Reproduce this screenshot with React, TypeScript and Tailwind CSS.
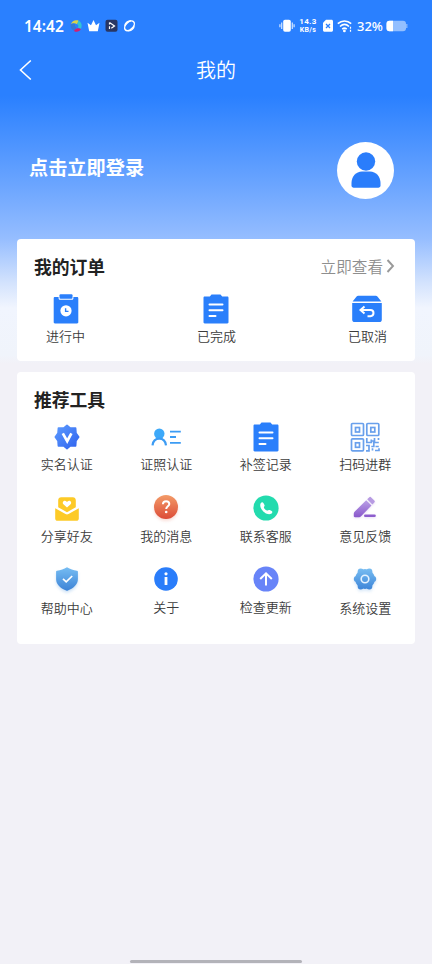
import type { ReactNode } from "react"

interface MenuItem {
  label: string
  icon: ReactNode
  iconClass?: string
  labelClass?: string
}

function ClipboardClockIcon() {
  return (
    <svg width="26" height="30" viewBox="0 0 26 30">
      <path d="M1.900 3H5.600v1.200c0 .9.700 1.600 1.600 1.600h11.600c.9 0 1.600-.7 1.600-1.600V3h3.700c.7 0 1.200.5 1.200 1.200v24.100c0 .7-.5 1.200-1.200 1.200H1.900c-.7 0-1.200-.5-1.200-1.200V4.200C.7 3.500 1.200 3 1.900 3z" fill="#2a7ffb" />
      <rect x="6.500" y="0.300" width="13" height="4.500" rx="1" fill="#2a7ffb" />
      <circle cx="13" cy="16.800" r="5.600" fill="#fff" />
      <path d="M12.600 14.300v3.100h2.900" fill="none" stroke="#2a7ffb" strokeWidth="1.400" />
    </svg>
  )
}

function ClipboardListIcon() {
  return (
    <svg width="26" height="30" viewBox="0 0 26 30">
      <path d="M1.700 2.500h5.100L8.500.4h9l1.700 2.100h5.100c.7 0 1.200.5 1.200 1.200v24.600c0 .7-.5 1.200-1.200 1.200H1.700c-.7 0-1.200-.5-1.200-1.200V3.700c0-.7.5-1.200 1.200-1.200z" fill="#2a7ffb" />
      <path d="M6.500 10.500h13M6.500 16.200h13M6.500 22h6" stroke="#fff" strokeWidth="2" strokeLinecap="round" />
    </svg>
  )
}

function BoxReturnIcon() {
  return (
    <svg width="30" height="30" viewBox="0 0 30 30">
      <path d="M6.200 1.800h17.600c.7 0 1.200.2 1.600.7l4 5H.6l4-5c.4-.5.900-.7 1.600-.7z" fill="#2a7ffb" />
      <path d="M.2 9.100h29.600v16.600c0 1.400-1 2.400-2.400 2.400H2.600C1.200 28.100.2 27.100.2 25.700z" fill="#2a7ffb" />
      <path d="M12.500 12.500 8.500 16l4 3.500M9 16h9.400a3 3 0 0 1 0 6.200h-2.900" fill="none" stroke="#fff" strokeWidth="2" />
    </svg>
  )
}

function VerifiedIcon() {
  return (
    <svg width="26" height="26" viewBox="0 0 26 26">
      <defs>
        <linearGradient id="verified" x1="0" y1="0" x2="1" y2="1">
          <stop offset="0" stopColor="#5c9bff" />
          <stop offset="1" stopColor="#2f62ee" />
        </linearGradient>
      </defs>
      <path d="m13 1.300 3.300 2.700h5.300l.4 5.300 2.700 3.700-2.700 3.700-.4 5.300h-5.300L13 24.700 9.700 22H4.400L4 16.700 1.300 13 4 9.300 4.400 4h5.300z" fill="url(#verified)" stroke="url(#verified)" strokeWidth="1.600" strokeLinejoin="round" />
      <path d="m8.800 9.300 4.400 7.800 4.200-7.800" fill="none" stroke="#fff" strokeWidth="2.700" />
    </svg>
  )
}

function LicenseIcon() {
  return (
    <svg width="30" height="18" viewBox="0 0 30 18">
      <circle cx="8.300" cy="5.800" r="5.200" fill="#3da9f9" />
      <path d="M1.500 17.300c.6-4.600 3-6.700 6.800-6.700s6.100 2.100 6.700 6.700" fill="none" stroke="#3c9cf4" strokeWidth="2.200" />
      <path d="M19 3.600h10.800M19 9h6M19 14.900h10.800" stroke="#3c9cf4" strokeWidth="1.900" />
    </svg>
  )
}

function QrIcon() {
  return (
    <svg width="30" height="30" viewBox="0 0 30 30" fill="none" stroke="#69a0ec" strokeWidth="1.700">
      <rect x="1.500" y="1.500" width="12" height="12" rx="1" />
      <rect x="16.800" y="1.500" width="12" height="12" rx="1" />
      <rect x="1.500" y="16.800" width="12" height="12" rx="1" />
      <rect x="5.500" y="5.500" width="4" height="4.500" />
      <rect x="20.800" y="5.500" width="4" height="4.500" />
      <rect x="5.500" y="20.800" width="4" height="4.500" />
      <path d="M16.800 16v4.500h4.500v-3M24.500 16v3h-3M28.500 16v2M28.800 20.500h-5v4h-2.500M16 23.500h3v5.300h-3M22.500 28.500v-2.300M25.500 24.500h3.300M25 28.500h4v-2.200" />
    </svg>
  )
}

function EnvelopeHeartIcon() {
  return (
    <svg width="24" height="24" viewBox="0 0 24 24">
      <path d="M6.200.2h11.600c1.800 0 3 1.200 3 3v7L12 15.300 3.200 10.200v-7c0-1.800 1.200-3 3-3z" fill="#fdca27" />
      <path d="M.2 11.200 10.500 17c1 .6 2 .6 3 0l10.300-5.800v10.300c0 1.400-1 2.300-2.300 2.300h-19c-1.300 0-2.300-.9-2.300-2.300z" fill="#fdca27" />
      <path d="M12 10.600 8.400 7.200c-1.900-2 .9-4.900 3.100-2.800l.5.500.5-.5c2.200-2.100 5 .8 3.100 2.800z" fill="#fff" />
    </svg>
  )
}

function QuestionIcon() {
  return (
    <svg width="26" height="26" viewBox="0 0 26 26" className="drop-shadow-[0_2px_1.5px_rgba(225,90,60,0.2)]">
      <defs>
        <linearGradient id="question" x1="0" y1="0" x2="0" y2="1">
          <stop offset="0" stopColor="#f39b68" />
          <stop offset="1" stopColor="#dc4c38" />
        </linearGradient>
      </defs>
      <circle cx="13" cy="13" r="12" fill="url(#question)" />
      <path d="M9.900 10.300c.1-2 1.300-3.100 3.200-3.100s3.200 1.100 3.200 2.800c0 2.200-3.100 2.300-3.100 4.900" fill="none" stroke="#fff" strokeWidth="2" />
      <circle cx="13.200" cy="18" r="1.300" fill="#fff" />
    </svg>
  )
}

function PhoneIcon() {
  return (
    <svg width="26" height="26" viewBox="0 0 26 26">
      <circle cx="13" cy="13" r="12.600" fill="#23dbae" />
      <path d="M7.700 8.200c.8-1.200 2-1.500 2.700-.3l1.100 2c.5 1-.7 1.600-.6 2.500.2 1.200 2 3 3.300 3.200 1 .1 1.400-1 2.500-.6l2 1c1.200.7.600 2.100-.6 2.800C13.300 21.200 5.200 13.200 7.700 8.200z" fill="#fff" />
    </svg>
  )
}

function PencilIcon() {
  return (
    <svg width="24" height="24" viewBox="0 0 24 24" className="drop-shadow-[0_1px_1px_rgba(145,95,210,0.2)]">
      <defs>
        <linearGradient id="pencil" x1="0" y1="0" x2="0" y2="1">
          <stop offset="0" stopColor="#baa0e6" />
          <stop offset="1" stopColor="#8957cb" />
        </linearGradient>
      </defs>
      <path d="M1.800 15.500 13.200 4.300l5.300 5.200L7.800 20.400c-.5.500-1 .7-1.700.8H2c-.8 0-1.200-.3-1.200-1.100v-2.600c0-.8.400-1.400 1-2z" fill="url(#pencil)" />
      <path d="m14.200 3.300 1.900-1.900c.7-.7 1.400-.7 2.100 0l3.100 3.100c.7.700.7 1.400 0 2.100l-1.900 1.900z" fill="#b79be2" />
      <path d="M12.300 19.800h9.200" stroke="#8d5dcd" strokeWidth="2.600" strokeLinecap="round" />
    </svg>
  )
}

function ShieldIcon() {
  return (
    <svg width="24" height="26" viewBox="0 0 24 26" className="drop-shadow-[0_2px_1.5px_rgba(60,140,220,0.25)]">
      <defs>
        <linearGradient id="shield" x1="0" y1="0" x2="0" y2="1">
          <stop offset="0" stopColor="#76bdf3" />
          <stop offset="1" stopColor="#3d83d6" />
        </linearGradient>
      </defs>
      <path d="M12 1.200c3.200 2 6.300 3 10 3.500.6.100.9.400.9 1V13c0 5.400-4 9-10 11.500-.6.300-1.200.3-1.800 0C5.100 22 1.100 18.400 1.100 13V5.700c0-.6.3-.9.900-1C5.700 4.200 8.800 3.200 12 1.200z" fill="url(#shield)" />
      <path d="m8 12.800 3.200 3 6-5.800" fill="none" stroke="#fff" strokeWidth="1.700" />
    </svg>
  )
}

function InfoIcon() {
  return (
    <svg width="24" height="24" viewBox="0 0 24 24">
      <circle cx="12" cy="12" r="11.800" fill="#2a7dfa" />
      <circle cx="12" cy="6.800" r="1.600" fill="#fff" />
      <path d="M12 10v8" stroke="#fff" strokeWidth="2.800" />
    </svg>
  )
}

function ArrowUpIcon() {
  return (
    <svg width="26" height="26" viewBox="0 0 26 26">
      <circle cx="13" cy="13" r="12.600" fill="#6884f8" />
      <path d="M13 19.500V8M7.200 13 13 7.400l5.800 5.600" fill="none" stroke="#fff" strokeWidth="2" />
    </svg>
  )
}

function GearIcon() {
  return (
    <svg width="26" height="26" viewBox="0 0 26 26" className="drop-shadow-[0_2px_1.5px_rgba(60,140,220,0.2)]">
      <defs>
        <linearGradient id="gear" gradientUnits="userSpaceOnUse" x1="13" y1="2" x2="13" y2="24">
          <stop offset="0" stopColor="#79bef2" />
          <stop offset="1" stopColor="#3c84d8" />
        </linearGradient>
      </defs>
      <g fill="url(#gear)">
        <circle cx="13" cy="13" r="9.900" />
        <circle cx="4.800" cy="13" r="3" />
        <circle cx="21.200" cy="13" r="3" />
        <circle cx="8.700" cy="5.400" r="3" />
        <circle cx="17.300" cy="5.400" r="3" />
        <circle cx="8.700" cy="20.600" r="3" />
        <circle cx="17.300" cy="20.600" r="3" />
      </g>
      <circle cx="13" cy="13" r="3.800" fill="none" stroke="#e4f2ff" strokeWidth="1.600" />
    </svg>
  )
}

const orders: MenuItem[] = [
  { label: "进行中", icon: <ClipboardClockIcon /> },
  { label: "已完成", icon: <ClipboardListIcon /> },
  { label: "已取消", icon: <BoxReturnIcon /> },
]

const tools: MenuItem[] = [
  { label: "实名认证", icon: <VerifiedIcon />, iconClass: "pb-px" },
  { label: "证照认证", icon: <LicenseIcon /> },
  { label: "补签记录", icon: <ClipboardListIcon /> },
  { label: "扫码进群", icon: <QrIcon /> },
  { label: "分享好友", icon: <EnvelopeHeartIcon /> },
  { label: "我的消息", icon: <QuestionIcon />, iconClass: "pb-[3px]" },
  { label: "联系客服", icon: <PhoneIcon />, iconClass: "pb-px" },
  { label: "意见反馈", icon: <PencilIcon />, iconClass: "pb-[2px]" },
  { label: "帮助中心", icon: <ShieldIcon />, iconClass: "pb-[3px]", labelClass: "pt-px" },
  { label: "关于", icon: <InfoIcon />, iconClass: "pb-[3px]" },
  { label: "检查更新", icon: <ArrowUpIcon />, iconClass: "pb-[3px]" },
  { label: "系统设置", icon: <GearIcon />, iconClass: "pb-[3px]", labelClass: "pt-px" },
]

function StatusBar() {
  return (
    <div className="flex h-[52px] items-center justify-between pl-6 pr-6 text-white">
      <div className="flex items-center">
        <span className="w-[46px] font-['Noto_Sans'] text-[15.5px] font-semibold leading-[16px]">14:42</span>
        <svg width="68" height="14" viewBox="0 0 68 14" fill="none">
          <path d="M1 5C2 1.500 5.500.4 8.500 1.600L7.200 5.200C4.700 4 3 4.200 1 5z" fill="#d9d34a" />
          <path d="M8.500 1.600c3 1.500 4 5 2.500 8.200L7.800 8.500c1-1.500.8-2.400-.6-3.300z" fill="#31c4d4" />
          <path d="M.8 5.300c1.500-1.100 3-1.100 4.300-.2-.5 1.800.2 2.800 1.500 3.700L4 11.700C1.200 10.500 0 8.200.8 5.300z" fill="#3478d6" />
          <path d="M4 11.900c1.500-2.300 3.500-3.600 6.900-1.900-1.300 2.600-4.300 3.600-6.900 1.900z" fill="#d31f70" />
          <path d="m17.500 3.800 3.500 2.400L23.500 1 26 6.200l3.500-2.400-1.700 8.500h-8.600z" fill="#fff" />
          <rect x="35.500" y=".7" width="12" height="12" rx="2" fill="#293663" />
          <path d="M39.500 10V7.300M39.500 3.500l5 3.400-3.200 2.300M39.500 3.500v2" stroke="#fff" strokeWidth="1.200" />
          <g transform="rotate(-45 59.500 6.800)" stroke="#fff">
            <ellipse cx="59.500" cy="6.800" rx="5.800" ry="3.600" strokeWidth="1.500" />
            <path d="M55 9.200c2 2.800 6 2.800 8 .6M64 4.400c-2-2.800-6-2.800-8-.6" strokeWidth="1.300" />
          </g>
        </svg>
      </div>
      <div className="flex items-center">
        <svg width="16" height="14" viewBox="0 0 16 14">
          <rect x="4.200" y=".8" width="7.600" height="12" rx="1.800" fill="#fff" />
          <path d="M2.700 3.500v6.600M13.300 3.500v6.600M.9 5.300v3M15.100 5.300v3" stroke="#c8deff" strokeWidth="1.300" />
        </svg>
        <div className="ml-[3px] w-[20px] pb-px text-center font-['Roboto'] text-[8px] font-bold leading-[9px] tracking-[0.3px]">
          <div>14.3</div>
          <div className="text-[7px] leading-[8px]">KB/s</div>
        </div>
        <svg width="12" height="14" viewBox="0 0 12 14" className="ml-1">
          <path d="M4 .8h5.500c.8 0 1.500.7 1.500 1.500v9c0 .8-.7 1.500-1.500 1.500h-7c-.8 0-1.500-.7-1.500-1.500V3.800z" fill="#fff" />
          <path d="m4 5 4 4M8 5 4 9" stroke="#2a80ff" strokeWidth="1.300" />
        </svg>
        <svg width="16" height="14" viewBox="0 0 16 14" fill="none" stroke="#fff" strokeWidth="1.600" className="ml-[3px]">
          <path d="M.8 4.700c4-3.700 9.400-3.700 13.400 0M3 7.500c2.900-2.600 6.200-2.600 9 0M5.200 10.100c1.700-1.400 3-1.400 4.500 0" />
          <circle cx="7.400" cy="11.900" r=".6" fill="#fff" />
          <path d="M13.500 7.800v2M13.500 10.800v2" strokeWidth="1.200" />
        </svg>
        <span className="ml-1 w-[28px] font-['Noto_Sans'] text-[13px] font-medium leading-none">32%</span>
        <svg width="22" height="12" viewBox="0 0 22 12" className="ml-px">
          <rect x=".5" y=".8" width="19.500" height="10.400" rx="3" fill="#93bfff" />
          <path d="M3.500.8H7v10.400H3.500a3 3 0 0 1-3-3V3.800a3 3 0 0 1 3-3z" fill="#fff" />
          <path d="M20.800 4v4" stroke="#93bfff" strokeWidth="1.200" />
        </svg>
      </div>
    </div>
  )
}

export default function App() {
  return (
    <div className="flex h-[964px] w-[432px] flex-col overflow-hidden bg-[#f2f1f7] bg-[linear-gradient(180deg,#2a80ff_0px,#2a80ff_96px,#448fff_132px,#6ba5ff_185px,#95bdff_238px,#d2e2fd_282px,#f1f5fe_308px,#f0f4fb_355px,#f2f1f7_364px)] font-['Noto_Sans_CJK_SC',sans-serif]">
      <StatusBar />

      {/* Nav bar */}
      <div className="grid h-[36px] grid-cols-[1fr_auto_1fr] items-center">
        <svg width="14" height="22" viewBox="0 0 14 22" className="ml-[19px]">
          <path d="M11.800 1.500 1.500 11l10.300 9.500" fill="none" stroke="#fff" strokeWidth="1.600" />
        </svg>
        <h1 className="text-[20px] font-[350] leading-none text-white">我的</h1>
      </div>

      {/* Login */}
      <div className="flex h-[151px] items-center justify-between pl-[29px] pr-[38px] pb-[8px] pt-[21px]">
        <span className="pb-1 text-[19.2px] font-bold leading-none text-white">点击立即登录</span>
        <div className="flex size-[57px] items-center justify-center rounded-full bg-white">
          <svg width="30" height="36" viewBox="0 0 30 36">
            <circle cx="15" cy="9.500" r="9.200" fill="#2a7dfb" />
            <path d="M11 19.500h8c6 0 10.500 5 10.500 11.500v2.500c0 1.300-.9 2.200-2.200 2.200H2.700c-1.300 0-2.200-.9-2.200-2.200V31C.5 24.500 5 19.500 11 19.500z" fill="#2a7dfb" />
          </svg>
        </div>
      </div>

      {/* Orders */}
      <section className="mx-[17px] h-[122px] rounded-[4px] bg-white pt-[17px]">
        <div className="flex items-center justify-between pl-[17px] pr-[20px]">
          <h2 className="text-[17.8px] font-bold leading-[20px] text-[#222]">我的订单</h2>
          <div className="flex items-center gap-[3px] text-[15.6px] font-[350] leading-[20px] text-[#8e8e8e]">
            <span>立即查看</span>
            <svg width="9" height="14" viewBox="0 0 9 14">
              <path d="m1.500 1 5.500 6-5.500 6" fill="none" stroke="#999" strokeWidth="1.900" />
            </svg>
          </div>
        </div>
        <div className="mt-[18px] flex justify-between pl-[29px] pr-[28px]">
          {orders.map((item) => (
            <div key={item.label} className="flex flex-col items-center">
              <div className="flex h-[30px] items-center">{item.icon}</div>
              <span className="mt-[4px] text-[13px] font-[350] leading-[16px] text-[#3c3c3c]">{item.label}</span>
            </div>
          ))}
        </div>
      </section>

      {/* Tools */}
      <section className="mx-[17px] mt-[11px] h-[272px] rounded-[4px] bg-white pt-[17px]">
        <h2 className="pl-[17px] text-[17.8px] font-bold leading-[20px] text-[#222]">推荐工具</h2>
        <div className="mt-[13px] grid auto-rows-[71.5px] grid-cols-4">
          {tools.map((item) => (
            <div key={item.label} className="flex flex-col items-center">
              <div className={`flex h-[30px] items-center ${item.iconClass ?? ""}`}>{item.icon}</div>
              <span className={`mt-[4px] text-[13px] font-[350] leading-[16px] text-[#3c3c3c] ${item.labelClass ?? ""}`}>{item.label}</span>
            </div>
          ))}
        </div>
      </section>

      {/* Home indicator */}
      <div className="mx-auto mb-[1px] mt-auto h-[3px] w-[172px] rounded-full bg-[#b3b3b9]" />
    </div>
  )
}
